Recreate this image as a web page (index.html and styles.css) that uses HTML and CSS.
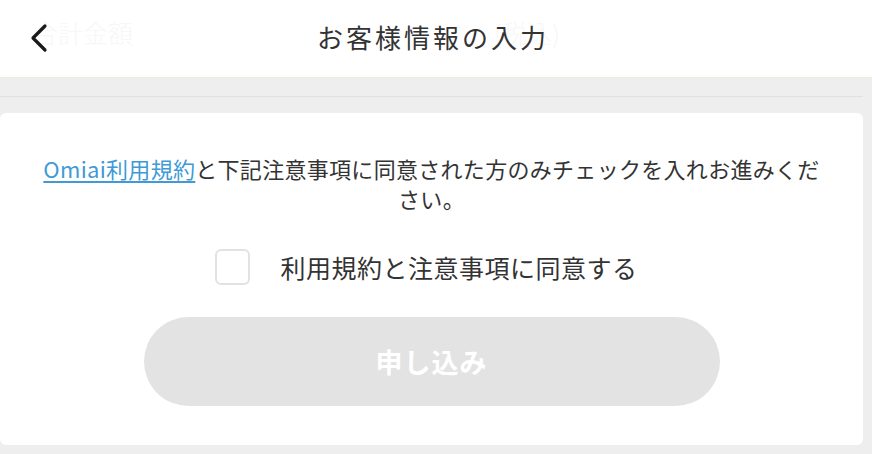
FILE: index.html
```html
<!DOCTYPE html>
<html lang="ja">

<head>
    <meta charset="utf-8">
    <title>お客様情報の入力</title>
    <link rel="stylesheet" href="styles.css">
</head>

<body>
    <header class="top-bar">
        <span class="ghost ghost-total">合計金額</span>
        <span class="ghost ghost-tax">(税込)</span>
        <a class="back-btn" href="#">
            <svg width="18" height="30" viewBox="0 0 18 30">
                <polyline points="15,3 3,15 15,27" fill="none" stroke="#1a1a1a" stroke-width="3.2" stroke-linecap="round" stroke-linejoin="round" />
            </svg>
        </a>
        <h1 class="page-title">お客様情報の入力</h1>
        <div></div>
    </header>

    <main class="content">
        <div class="divider"></div>
        <section class="agree-card">
            <p class="notice"><a href="#">Omiai利用規約</a>と下記注意事項に同意された方のみチェックを入れお進みください。</p>
            <label class="agree-check">
                <span class="check-box"></span>
                <span class="check-label">利用規約と注意事項に同意する</span>
            </label>
            <button class="apply-btn" type="button" disabled>申し込み</button>
        </section>
    </main>
</body>

</html>
```

FILE: styles.css
```css
body {
    margin: 0;
    background-color: #eeeeee;
    font-family: "Noto Sans CJK JP", "Noto Sans", sans-serif;
    color: #333333;
}

.top-bar {
    position: relative;
    height: 77px;
    background-color: #ffffff;
    border-bottom: 1px solid #f1ecd6;
    display: grid;
    grid-template-columns: 1fr auto 1fr;
    align-items: center;
}

.ghost {
    position: absolute;
    color: #f7f7f7;
    font-size: 25px;
    font-weight: 300;
}

.ghost-total {
    left: 33px;
    top: 14px;
}

.ghost-tax {
    left: 494px;
    top: 14px;
}

.back-btn {
    position: relative;
    display: flex;
    padding-left: 30px;
    margin-bottom: 2px;
}

.page-title {
    position: relative;
    margin: 0 0 4px;
    padding-right: 6px;
    font-size: 26px;
    font-weight: 400;
    letter-spacing: 3px;
    color: #333333;
}

.divider {
    margin-top: 18px;
    width: 863px;
    height: 1px;
    background-color: #e0e0e0;
}

.agree-card {
    margin-top: 16px;
    width: 863px;
    height: 332px;
    box-sizing: border-box;
    padding: 40px 38px 0;
    background-color: #ffffff;
    border-radius: 6px;
    display: flex;
    flex-direction: column;
    align-items: center;
}

.notice {
    margin: 0;
    font-size: 22px;
    line-height: 30px;
    letter-spacing: 0.3px;
    text-align: center;
    color: #333333;
}

.notice a {
    color: #3f9ad6;
    text-decoration: underline;
    text-decoration-thickness: 2px;
    text-underline-offset: 3px;
}

.agree-check {
    margin-top: 36px;
    display: flex;
    align-items: center;
    gap: 30px;
    margin-right: 10px;
}

.check-box {
    width: 31px;
    height: 32px;
    border: 2px solid #e2e2e2;
    border-radius: 6px;
}

.check-label {
    font-size: 25px;
    letter-spacing: 0.5px;
    color: #333333;
}

.apply-btn {
    margin-top: 32px;
    width: 576px;
    height: 89px;
    border: none;
    border-radius: 45px;
    background-color: #e3e3e3;
    color: #ffffff;
    font-family: "Noto Sans CJK JP", "Noto Sans", sans-serif;
    font-size: 27px;
    font-weight: 700;
    letter-spacing: 1px;
}
```
